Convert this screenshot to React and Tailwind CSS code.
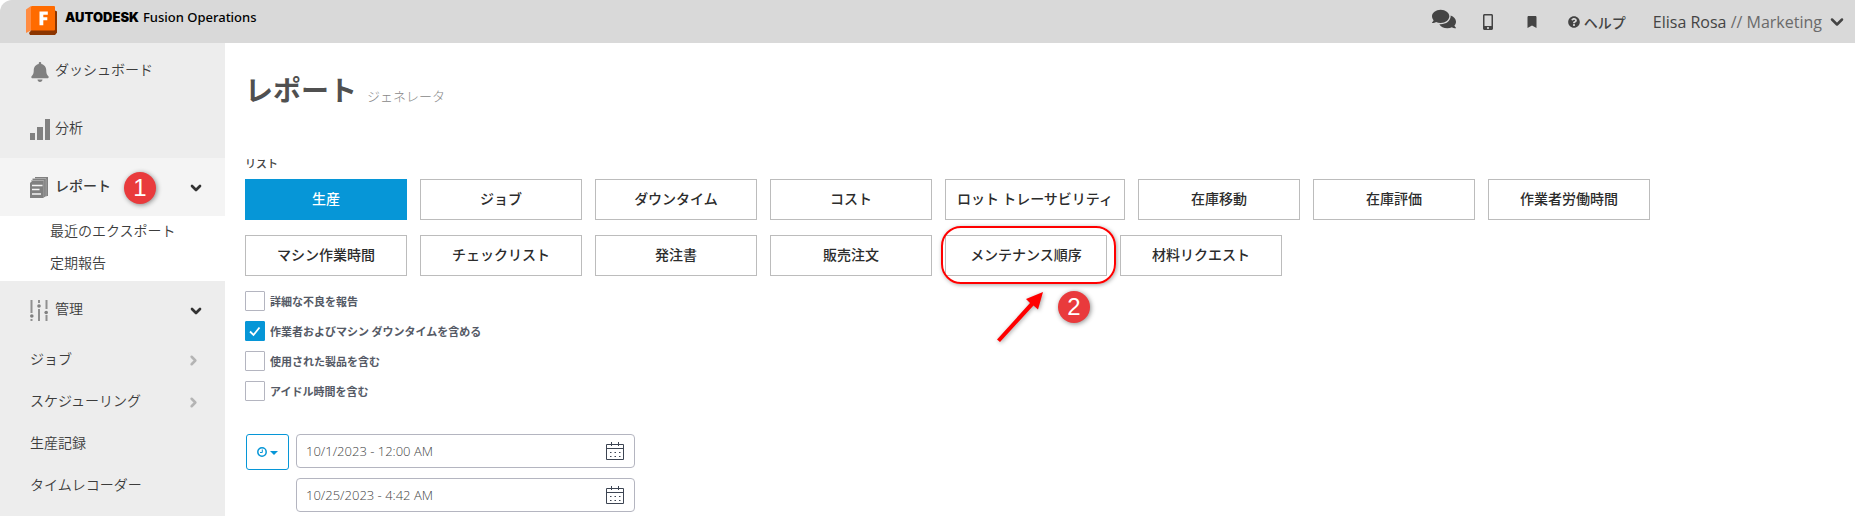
import React from "react";
import {
  FaBell,
  FaBookmark,
  FaComments,
  FaMobileAlt,
  FaQuestionCircle,
} from "react-icons/fa";
import { ChevronDown, ChevronRight } from "lucide-react";

const reportTypes = [
  { label: "生産", active: true },
  { label: "ジョブ" },
  { label: "ダウンタイム" },
  { label: "コスト" },
  { label: "ロット トレーサビリティ" },
  { label: "在庫移動" },
  { label: "在庫評価" },
  { label: "作業者労働時間" },
  { label: "マシン作業時間" },
  { label: "チェックリスト" },
  { label: "発注書" },
  { label: "販売注文" },
  { label: "メンテナンス順序", callout: true },
  { label: "材料リクエスト" },
];

const options = [
  { id: "detailed", label: "詳細な不良を報告", checked: false },
  { id: "downtime", label: "作業者およびマシン ダウンタイムを含める", checked: true },
  { id: "products", label: "使用された製品を含む", checked: false },
  { id: "idle", label: "アイドル時間を含む", checked: false },
];

function FusionLogo() {
  return (
    <svg viewBox="0 0 31 29" className="h-[29px] w-[31px]" aria-hidden="true">
      <path d="M0 3.500 5 0v24.500L0 27z" fill="#ff8c42" />
      <path d="M28.500 5 31 6v20l-2.500 3z" fill="#a33f00" />
      <path d="M5 24.500 3 27l1 2h25l2-2.500V5.500l-2-1z" fill="#8c3500" />
      <rect x="5" width="24" height="24.500" rx="1" fill="#ff6b00" />
      <path d="M13.500 5.500h8.300v3.200h-4.500v2.600h4v3h-4v5h-3.800z" fill="#fff" />
    </svg>
  );
}

function BarsIcon() {
  return (
    <svg viewBox="0 0 20 21" className="h-[21px] w-5" fill="#808080" aria-hidden="true">
      <rect x="0" y="14" width="5" height="7" />
      <rect x="7" y="8" width="6" height="13" />
      <rect x="15" y="0" width="5" height="21" />
    </svg>
  );
}

function DocsIcon() {
  return (
    <svg viewBox="0 0 18 21" className="h-[21px] w-[18px]" aria-hidden="true">
      <path d="M5 0h13v19H5z" fill="#808080" />
      <path d="M2.500 1.500h13.500V20" fill="none" stroke="#b4b4b4" strokeWidth=".8" />
      <path d="M2.500 2h12.800v18H2.500z" fill="#808080" />
      <path d="M1 3.500h12.700V21" fill="none" stroke="#b4b4b4" strokeWidth=".8" />
      <path d="M2 4h11.500v17H0V6z" fill="#808080" />
      <path d="M2 8.500h10.500M2 12.500h7.500M2 17h9" stroke="#f4f4f4" strokeWidth="1.500" />
    </svg>
  );
}

function SlidersIcon() {
  return (
    <svg viewBox="0 0 18 21" className="h-[21px] w-[18px]" aria-hidden="true">
      <path d="M1.500 0v13M1.500 19v2M9 0v3M9 9v12M16.500 0v9M16.500 15v6" stroke="#909090" strokeWidth="2" />
      <g fill="#808080">
        <circle cx="1.800" cy="16" r="1.800" />
        <circle cx="9" cy="6" r="1.800" />
        <circle cx="16.200" cy="12.500" r="1.800" />
      </g>
    </svg>
  );
}

function CalendarIcon() {
  return (
    <svg viewBox="0 0 18 18" className="h-[18px] w-[18px]" fill="none" stroke="#3c4452" aria-hidden="true">
      <path d="M.5 2.500h17v15H.5zM.5 6.500h17M5.500 0v4M12.500 0v4" />
      <path d="M4 10.500h11M4 14.500h11" strokeDasharray="1.500 3" strokeWidth="1.200" />
    </svg>
  );
}

function ClockIcon() {
  return (
    <svg viewBox="0 0 10 10" className="h-[10px] w-[10px]" fill="none" stroke="#0696d7" aria-hidden="true">
      <circle cx="5" cy="5" r="4.200" strokeWidth="1.500" />
      <path d="M5.300 2.500v3H3" />
    </svg>
  );
}

function CaretIcon() {
  return (
    <svg viewBox="0 0 8 4" className="mt-px h-1 w-2" fill="#0696d7" aria-hidden="true">
      <path d="M0 0h8L4 4z" />
    </svg>
  );
}

function Badge({ children }) {
  return (
    <span className="flex h-8 w-8 items-center justify-center rounded-full bg-[#e93a3c] font-['Liberation_Sans',sans-serif] text-2xl font-normal leading-none text-white shadow-[1px_1px_5px_rgba(0,0,0,0.45)]">
      {children}
    </span>
  );
}

function NavItem({ icon, open, badge, children }) {
  return (
    <a href="#" className="flex h-[58px] items-center pl-[30px] pr-[21px]">
      <span className="flex w-[25px] pt-px">{icon}</span>
      <span className="flex-1 pb-[5px]">{children}</span>
      {badge && <span className="mr-8 pt-px"><Badge>{badge}</Badge></span>}
      {open && <ChevronDown className="mt-[2px]" size={16} strokeWidth={4} color="#333" />}
    </a>
  );
}

function SubLink({ children, more }) {
  return (
    <a href="#" className="flex h-[42px] items-center justify-between pl-[30px] pr-[24px]">
      <span className="pb-1">{children}</span>
      {more && <ChevronRight size={15} strokeWidth={4} color="#b4b4b4" />}
    </a>
  );
}

function Sidebar() {
  return (
    <nav className="w-[225px] shrink-0 bg-[#ededed] text-sm font-[350] text-[#3c3c3c]">
      <div className="-mt-px">
        <NavItem icon={<FaBell size={20} color="#808080" />}>ダッシュボード</NavItem>
      </div>
      <NavItem icon={<BarsIcon />}>分析</NavItem>
      <div className="bg-[#f4f4f4] font-medium">
        <NavItem icon={<DocsIcon />} badge="1" open>レポート</NavItem>
      </div>
      <div className="bg-white pb-[5px] pl-[50px]">
        <a href="#" className="flex h-7 items-center">最近のエクスポート</a>
        <a href="#" className="flex h-8 items-center pt-1">定期報告</a>
      </div>
      <NavItem icon={<SlidersIcon />} open>管理</NavItem>
      <SubLink more>ジョブ</SubLink>
      <SubLink more>スケジューリング</SubLink>
      <SubLink>生産記録</SubLink>
      <SubLink>タイムレコーダー</SubLink>
    </nav>
  );
}

function Header() {
  return (
    <header className="flex h-[43px] items-center justify-between rounded-tl-xl bg-[#d9d9d9] pl-[26px] pr-2 text-[#444]">
      <a href="#" className="flex items-center gap-2 pb-[2px] text-black">
        <FusionLogo />
        <span className="flex items-baseline gap-1 pb-[5px]">
          <span className="font-[Inter,sans-serif] text-[13px] font-black">AUTODESK</span>
          <span className="font-['Noto_Sans',sans-serif] text-[13px] font-medium">Fusion Operations</span>
        </span>
      </a>
      <div className="flex items-center">
        <button aria-label="チャット" className="mr-6 pb-[6px]"><FaComments size={24} /></button>
        <button aria-label="モバイル" className="mr-[30px]"><FaMobileAlt size={16} /></button>
        <button aria-label="ブックマーク" className="mr-[30px]"><FaBookmark size={12} /></button>
        <a href="#" className="mr-[27px] flex items-center gap-1 text-sm font-medium">
          <FaQuestionCircle size={12} />
          ヘルプ
        </a>
        <button className="flex items-center gap-[5px] font-['Open_Sans',sans-serif] text-[16px]">
          <span>Elisa Rosa <span className="text-[#6a6a6a]">// Marketing</span></span>
          <ChevronDown size={20} strokeWidth={3} />
        </button>
      </div>
    </header>
  );
}

function ReportButton({ label, active, callout }) {
  return (
    <div className="relative">
      <button
        className={
          active
            ? "h-[41px] min-w-[162px] border border-[#0696d7] bg-[#0696d7] px-[11px] pb-[3px] text-sm font-medium text-white"
            : "h-[41px] min-w-[162px] border border-[#bcbcbc] bg-white px-[11px] pb-[3px] text-sm font-medium text-[#2c2c2c]"
        }
      >
        {label}
      </button>
      {callout && (
        <div className="pointer-events-none absolute -left-1 -right-[9px] -top-[9px] h-[58px] rounded-[20px] border-2 border-[#f00] shadow-[1px_1px_4px_rgba(0,0,0,0.35)]">
          <svg viewBox="0 0 46 50" className="absolute left-[54px] top-[64px] h-[50px] w-[46px] drop-shadow-[1px_1px_2px_rgba(0,0,0,0.35)]" fill="#f00" aria-hidden="true">
            <path d="M46 0 41 17.500 36.500 13.500 3 50 0 47.500 33 11 29 7z" />
          </svg>
          <span className="absolute left-[115px] top-[63px]"><Badge>2</Badge></span>
        </div>
      )}
    </div>
  );
}

function DateField({ label, value }) {
  return (
    <div className="flex h-[34px] w-[339px] items-center rounded border border-[#b4b5c0] bg-white pl-[9px] pr-[10px]">
      <input
        aria-label={label}
        defaultValue={value}
        className="min-w-0 flex-1 bg-transparent pt-[2px] font-['Open_Sans',sans-serif] text-[13px] font-light text-[#444] outline-none"
      />
      <button aria-label="カレンダー"><CalendarIcon /></button>
    </div>
  );
}

export default function App() {
  return (
    <div className="flex min-h-screen flex-col bg-white font-['Noto_Sans_CJK_JP',sans-serif] text-[#444]">
      <Header />
      <div className="flex flex-1">
        <Sidebar />
        <main className="min-w-0 flex-1 pl-5 pr-12 pt-[26px]">
          <div className="flex items-baseline gap-[10px]">
            <h1 className="text-[28px] font-bold leading-10 text-[#505050]">レポート</h1>
            <span className="text-[13px] font-light text-[#888]">ジェネレータ</span>
          </div>
          <h2 className="mt-[46px] text-[11px] font-medium leading-4">リスト</h2>
          <div className="mt-2 flex flex-wrap gap-x-[13px] gap-y-[15px]">
            {reportTypes.map((type) => (
              <ReportButton key={type.label} {...type} />
            ))}
          </div>
          <div className="mt-[15px] flex flex-col items-start gap-[10px]">
            {options.map((option) => (
              <div key={option.id} className="flex items-center gap-[5px]">
                <span className="grid h-5 w-5">
                  <input
                    id={option.id}
                    type="checkbox"
                    defaultChecked={option.checked}
                    className="peer col-start-1 row-start-1 h-5 w-5 appearance-none rounded-[1px] border border-[#b4b5c0] bg-white checked:border-[#0696d7] checked:bg-[#0696d7]"
                  />
                  <svg viewBox="0 0 20 20" className="pointer-events-none col-start-1 row-start-1 hidden h-5 w-5 peer-checked:block" fill="none" stroke="#fff" strokeWidth="1.800" aria-hidden="true">
                    <path d="M5 10.500 8.500 14 14.500 6.500" />
                  </svg>
                </span>
                <label htmlFor={option.id} className="text-[11px] font-bold leading-5 text-[#555a66]">
                  {option.label}
                </label>
              </div>
            ))}
          </div>
          <div className="mt-[33px] flex items-start gap-[7px] pl-px">
            <button aria-label="期間" className="flex h-9 w-[43px] items-center justify-center gap-[3px] rounded-[3px] border border-[#0696d7] text-[#0696d7]">
              <ClockIcon />
              <CaretIcon />
            </button>
            <div className="flex flex-col gap-[10px]">
              <DateField label="開始日時" value="10/1/2023 - 12:00 AM" />
              <DateField label="終了日時" value="10/25/2023 - 4:42 AM" />
            </div>
          </div>
        </main>
      </div>
    </div>
  );
}
